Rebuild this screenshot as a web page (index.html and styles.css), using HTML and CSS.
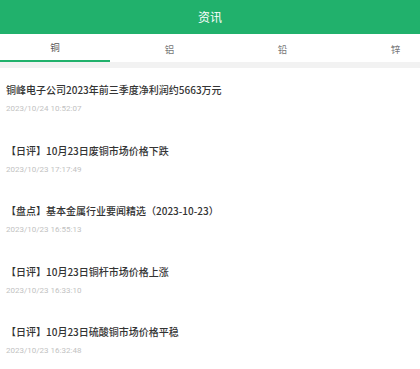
FILE: index.html
```html
<!DOCTYPE html>
<html lang="zh">
<head>
    <meta charset="UTF-8">
    <meta name="viewport" content="width=device-width, initial-scale=1.0">
    <title>资讯</title>
    <link rel="stylesheet" href="styles.css">
</head>
<body>

    <header class="topbar">资讯</header>

    <nav class="tabs">
        <div class="tab active">铜</div>
        <div class="tab">铝</div>
        <div class="tab">铅</div>
        <div class="tab">锌</div>
    </nav>

    <ul class="news">
        <li class="news-item">
            <div class="news-title">铜峰电子公司2023年前三季度净利润约5663万元</div>
            <div class="news-date">2023/10/24 10:52:07</div>
        </li>
        <li class="news-item">
            <div class="news-title">【日评】10月23日废铜市场价格下跌</div>
            <div class="news-date">2023/10/23 17:17:49</div>
        </li>
        <li class="news-item">
            <div class="news-title">【盘点】基本金属行业要闻精选（2023-10-23）</div>
            <div class="news-date">2023/10/23 16:55:13</div>
        </li>
        <li class="news-item">
            <div class="news-title">【日评】10月23日铜杆市场价格上涨</div>
            <div class="news-date">2023/10/23 16:33:10</div>
        </li>
        <li class="news-item">
            <div class="news-title">【日评】10月23日硫酸铜市场价格平稳</div>
            <div class="news-date">2023/10/23 16:32:48</div>
        </li>
    </ul>

</body>
</html>
```

FILE: styles.css
```css
body {
    margin: 0;
    font-family: "Noto Sans CJK SC", "Noto Sans", sans-serif;
    background-color: #fff;
}
.topbar {
    height: 34px;
    line-height: 34px;
    text-align: center;
    color: #fff;
    font-size: 12px;
    background-color: #21b16c;
}
/* four tabs are 113px wide, the last one is cut by the screen edge */
.tabs {
    display: flex;
    height: 28px;
    overflow: hidden;
    border-bottom: 6px solid #f2f2f2;
}
.tab {
    flex: 0 0 113px;
    display: flex;
    align-items: center;
    justify-content: center;
    font-size: 9.5px;
    color: #777;
    box-sizing: border-box;
    padding-top: 2px;
}
.tab.active {
    flex-basis: 110px;
    margin-right: 3px;
    border-bottom: 2px solid #21b16c;
    padding-top: 0;
    color: #555;
}
.news {
    list-style: none;
    margin: 0;
    padding: 0;
}
.news-item {
    padding: 14px 6px 13.5px;
}
.news-title {
    font-size: 10px;
    line-height: 16px;
    font-weight: 500;
    color: #333;
}
.news-date {
    margin-top: 5px;
    font-family: Roboto, "Noto Sans", sans-serif;
    font-size: 8px;
    line-height: 12px;
    color: #c2c2c2;
}
```
